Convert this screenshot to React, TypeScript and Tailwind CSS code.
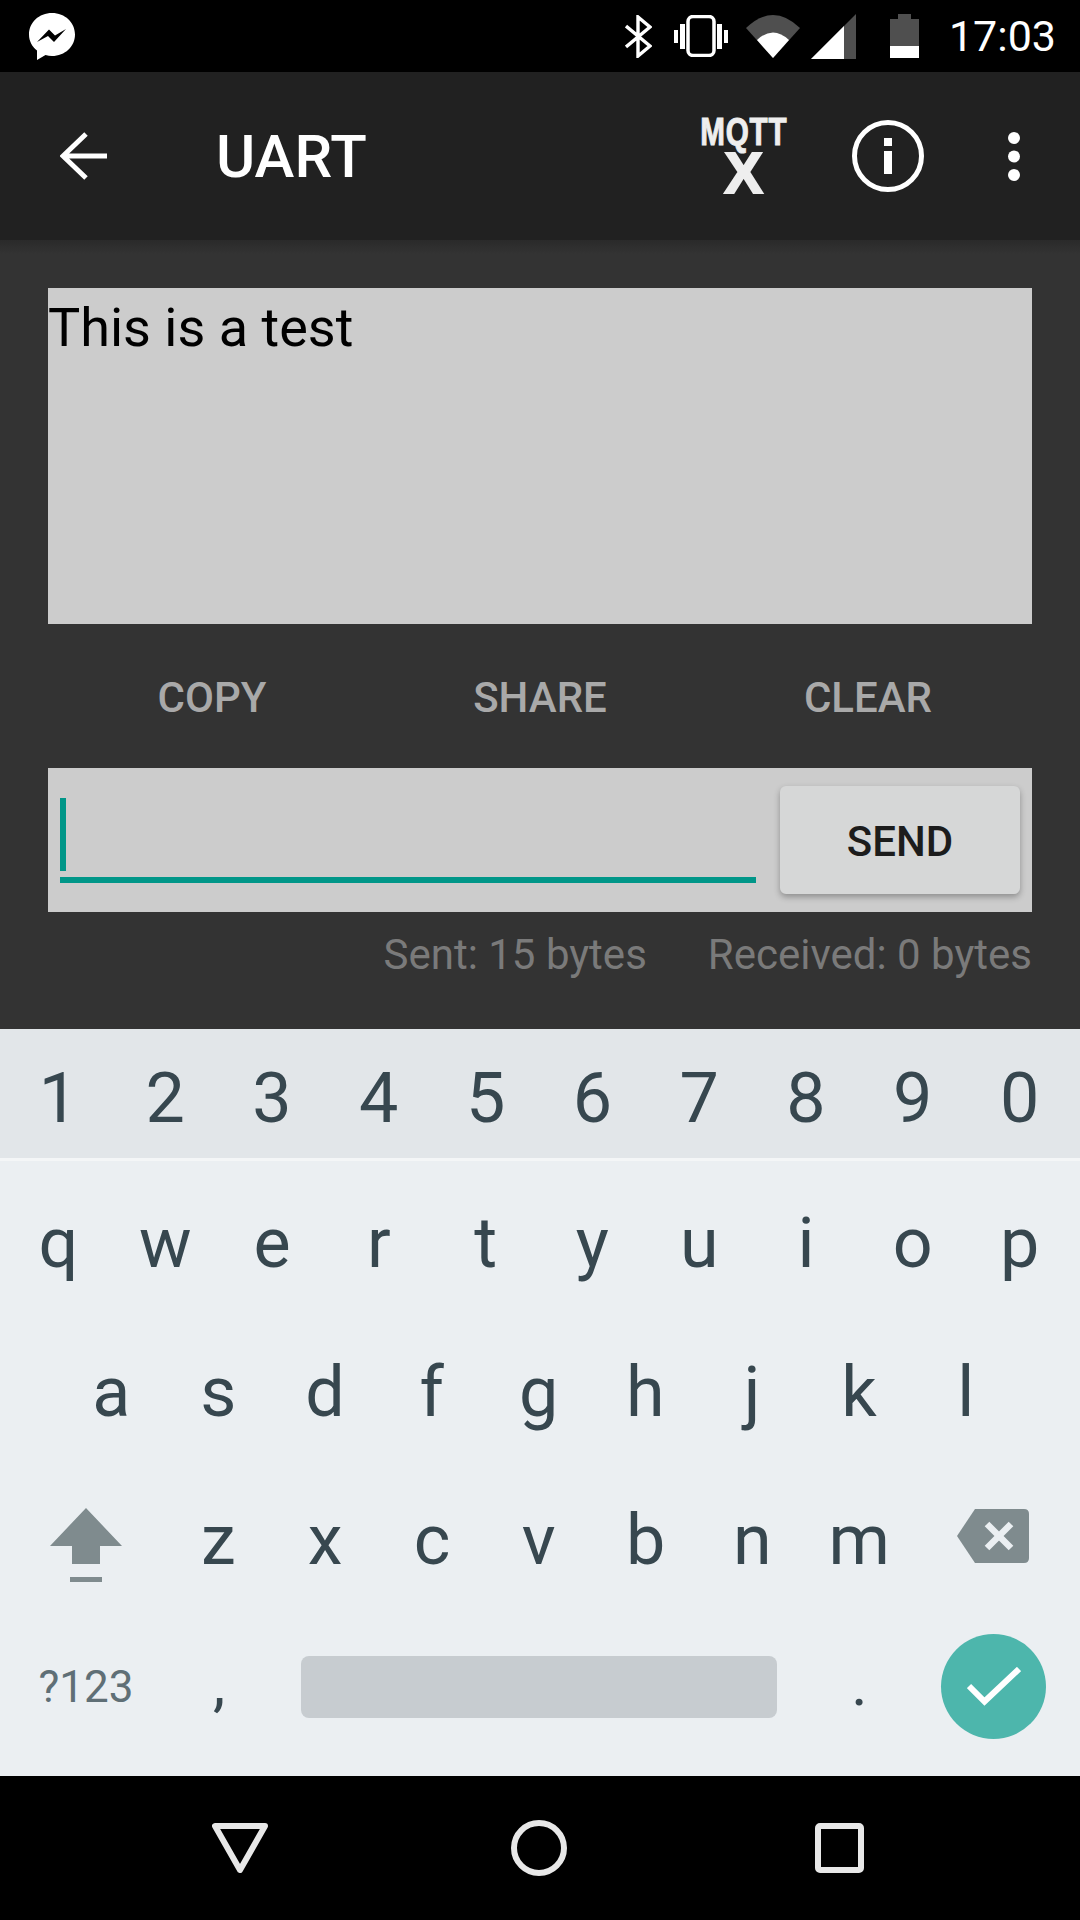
const digits = ["1", "2", "3", "4", "5", "6", "7", "8", "9", "0"];
const topRow = ["q", "w", "e", "r", "t", "y", "u", "i", "o", "p"];
const midRow = ["a", "s", "d", "f", "g", "h", "j", "k", "l"];
const lowRow = ["z", "x", "c", "v", "b", "n", "m"];

function StatusIcons() {
  return (
    <div className="ml-auto flex items-center">
      <svg width="27" height="43" viewBox="0 0 27 43" fill="none" stroke="white" strokeWidth="3.4">
        <path d="M1 11 L25 31 L13 41 V2 L25 12 L1 32" />
      </svg>
      <svg className="ml-[22px]" width="54" height="42" viewBox="0 0 54 42" fill="white">
        <rect x="0" y="15" width="4" height="13" />
        <rect x="6" y="9" width="5" height="25" />
        <rect x="14" y="1.5" width="26" height="39" rx="5" fill="none" stroke="white" strokeWidth="3.5" />
        <rect x="43" y="9" width="5" height="25" />
        <rect x="50" y="15" width="4" height="13" />
      </svg>
      <svg className="ml-[18px]" width="54" height="43" viewBox="0 0 54 43">
        <path d="M0 13 Q27 -13 54 13 L27 43 Z" fill="#4f4f4f" />
        <path d="M11 25 Q27 10 43 25 L27 43 Z" fill="white" />
      </svg>
      <svg className="ml-[11px]" width="45" height="45" viewBox="0 0 45 45">
        <path d="M0 45 L45 0 V45 Z" fill="#4f4f4f" />
        <path d="M0 45 L33 12 V45 Z" fill="white" />
      </svg>
      <svg className="ml-[34px]" width="29" height="44" viewBox="0 0 29 44">
        <path d="M0 5 H8 V0 H21 V5 H29 V44 H0 Z" fill="#4f4f4f" />
        <rect x="0" y="32" width="29" height="12" fill="white" />
      </svg>
      <span className="ml-[30px] mr-[24px] text-[43px] leading-none text-white">17:03</span>
    </div>
  );
}

function KeyRow({ keys, className }: { keys: string[]; className: string }) {
  return (
    <div className={`flex items-center ${className}`}>
      {keys.map((k) => (
        <div key={k} className="w-[106.8px] shrink-0 text-center text-[70px] leading-none text-[#37474f]">
          {k}
        </div>
      ))}
    </div>
  );
}

export default function App() {
  return (
    <div className="flex h-[1920px] w-[1080px] flex-col overflow-hidden bg-black font-['Roboto',sans-serif]">
      {/* status bar */}
      <div className="flex h-[72px] items-center pl-[29px]">
        <svg width="46" height="47" viewBox="0 0 46 47">
          <path d="M23 0 C10 0 0 9.5 0 21.5 C0 28 3 33.5 8 37.5 V47 L16.5 42 C18.8 42.7 20.8 43 23 43 C36 43 46 33.5 46 21.5 C46 9.5 36 0 23 0 Z" fill="white" />
          <path d="M8 29 L20 16.5 L26 22.5 L37 16 L25 29 L19 23 Z" fill="black" />
        </svg>
        <StatusIcons />
      </div>

      {/* app bar */}
      <div className="flex h-[168px] items-center bg-[#212121] pl-[60px] pr-[60px]">
        <svg width="48" height="48" viewBox="0 0 48 48" fill="none" stroke="white" strokeWidth="5">
          <path d="M47 24 H3 M26 2 L3 24 L26 46" />
        </svg>
        <span className="ml-[108px] mt-[2px] text-[60px] font-medium leading-none text-white">UART</span>
        <div className="ml-auto mt-[-1px] flex w-[87px] flex-col items-center font-['Liberation_Sans',sans-serif] font-bold leading-none text-[#eeeeee]">
          <span className="h-[34px] scale-x-[0.78] text-[38px] tracking-[1px] leading-[30px] [-webkit-text-stroke:1px_#eeeeee]">MQTT</span>
          <span className="h-[43px] text-[58px] leading-[43px] [-webkit-text-stroke:2px_#eeeeee]">X</span>
        </div>
        <svg className="ml-[65px]" width="72" height="72" viewBox="0 0 72 72">
          <circle cx="36" cy="36" r="33.5" fill="none" stroke="white" strokeWidth="5" />
          <rect x="32" y="18" width="8" height="8" fill="white" />
          <rect x="32" y="31" width="8" height="23" fill="white" />
        </svg>
        <svg className="ml-[84px]" width="12" height="49" viewBox="0 0 12 49" fill="white">
          <circle cx="6" cy="6" r="6" />
          <circle cx="6" cy="24.5" r="6" />
          <circle cx="6" cy="43" r="6" />
        </svg>
      </div>

      {/* content */}
      <div className="relative flex h-[789px] flex-col bg-[#333333] px-[48px] pt-[48px]">
        <div className="absolute inset-x-0 top-0 h-[14px] bg-gradient-to-b from-[#2a2a2a] to-[#333333]" />
        <div className="h-[336px] w-[984px] bg-[#cccccc] text-[54px] leading-[79px] text-black">This is a test</div>
        <div className="flex h-[144px] items-center pt-[3px] text-[42px] font-medium text-[#a9a9a9]">
          <span className="w-[328px] text-center">COPY</span>
          <span className="w-[328px] text-center">SHARE</span>
          <span className="w-[328px] text-center">CLEAR</span>
        </div>
        <div className="flex h-[144px] w-[984px] items-center bg-[#cccccc] px-[12px]">
          <div className="relative h-[144px] w-[696px]">
            <div className="absolute left-0 top-[30px] h-[73px] w-[6px] bg-[#009688]" />
            <div className="absolute inset-x-0 top-[109px] h-[6px] bg-[#009688]" />
          </div>
          <button className="ml-[24px] flex h-[108px] w-[240px] items-center justify-center rounded-[6px] bg-[#d6d7d7] pt-[2px] text-[42px] font-medium text-[#1c1c1c] shadow-[0_3px_6px_rgba(0,0,0,0.3)]">
            SEND
          </button>
        </div>
        <div className="flex h-[82px] items-center justify-end pt-[3px] text-[42px] text-[#7a7a7a]">
          <span>Sent: 15 bytes</span>
          <span className="ml-[61px]">Received: 0 bytes</span>
        </div>
      </div>

      {/* keyboard */}
      <div className="flex h-[747px] flex-col bg-[#ebeff2]">
        <KeyRow keys={digits} className="h-[132px] border-b-[3px] border-[#f4f6f7] bg-[#e2e6e9] px-[5px] pt-[8px]" />
        <KeyRow keys={topRow} className="h-[164px] px-[5px]" />
        <KeyRow keys={midRow} className="h-[147px] px-[58px] pb-[14px]" />
        <div className="flex h-[149px] items-center">
          <div className="mb-[3px] flex w-[165px] justify-center pl-[7px]">
            <svg width="72" height="74" viewBox="0 0 72 74" fill="#7f8b8e">
              <path d="M36 0 L72 38 H50 V56 H22 V38 H0 Z" />
              <rect x="20" y="69" width="32" height="5" />
            </svg>
          </div>
          <KeyRow keys={lowRow} className="mb-[14px]" />
          <div className="mb-[21px] flex flex-1 justify-center pr-[6px]">
            <svg width="72" height="54" viewBox="0 0 72 54">
              <path d="M18 0 H67 Q72 0 72 5 V49 Q72 54 67 54 H18 L0 27 Z" fill="#7f8b8e" />
              <path d="M30 15 L54 39 M54 15 L30 39" stroke="#ebeff2" strokeWidth="6.5" />
            </svg>
          </div>
        </div>
        <div className="flex h-[155px] items-center pb-[24px]">
          <span className="w-[172px] text-center text-[44px] leading-none text-[#5f6f76]">?123</span>
          <span className="mb-[6px] w-[94px] text-center text-[62px] leading-none text-[#37474f]">,</span>
          <div className="ml-[35px] h-[62px] w-[476px] rounded-[8px] bg-[#c7ccd0]" />
          <span className="mb-[6px] ml-[29px] w-[107px] text-center text-[62px] leading-none text-[#37474f]">.</span>
          <div className="ml-[28px] flex h-[105px] w-[105px] items-center justify-center rounded-full bg-[#4db6ac]">
            <svg width="54" height="40" viewBox="0 0 54 40" fill="none" stroke="white" strokeWidth="6">
              <path d="M2 19 L17.5 34.5 L52 2" />
            </svg>
          </div>
        </div>
      </div>

      {/* nav bar */}
      <div className="flex h-[144px] items-center justify-center bg-black pr-[5px]">
        <svg width="56" height="50" viewBox="0 0 56 50" fill="none" stroke="#e8e8e8" strokeWidth="6" strokeLinejoin="round">
          <path d="M3 3 H53 L28 47 Z" />
        </svg>
        <svg className="ml-[243px]" width="56" height="56" viewBox="0 0 56 56" fill="none" stroke="#e8e8e8" strokeWidth="6">
          <circle cx="28" cy="28" r="25" />
        </svg>
        <svg className="ml-[248px]" width="49" height="50" viewBox="0 0 49 50" fill="none" stroke="#e8e8e8" strokeWidth="6" strokeLinejoin="round">
          <rect x="3" y="3" width="43" height="44" rx="2" />
        </svg>
      </div>
    </div>
  );
}
